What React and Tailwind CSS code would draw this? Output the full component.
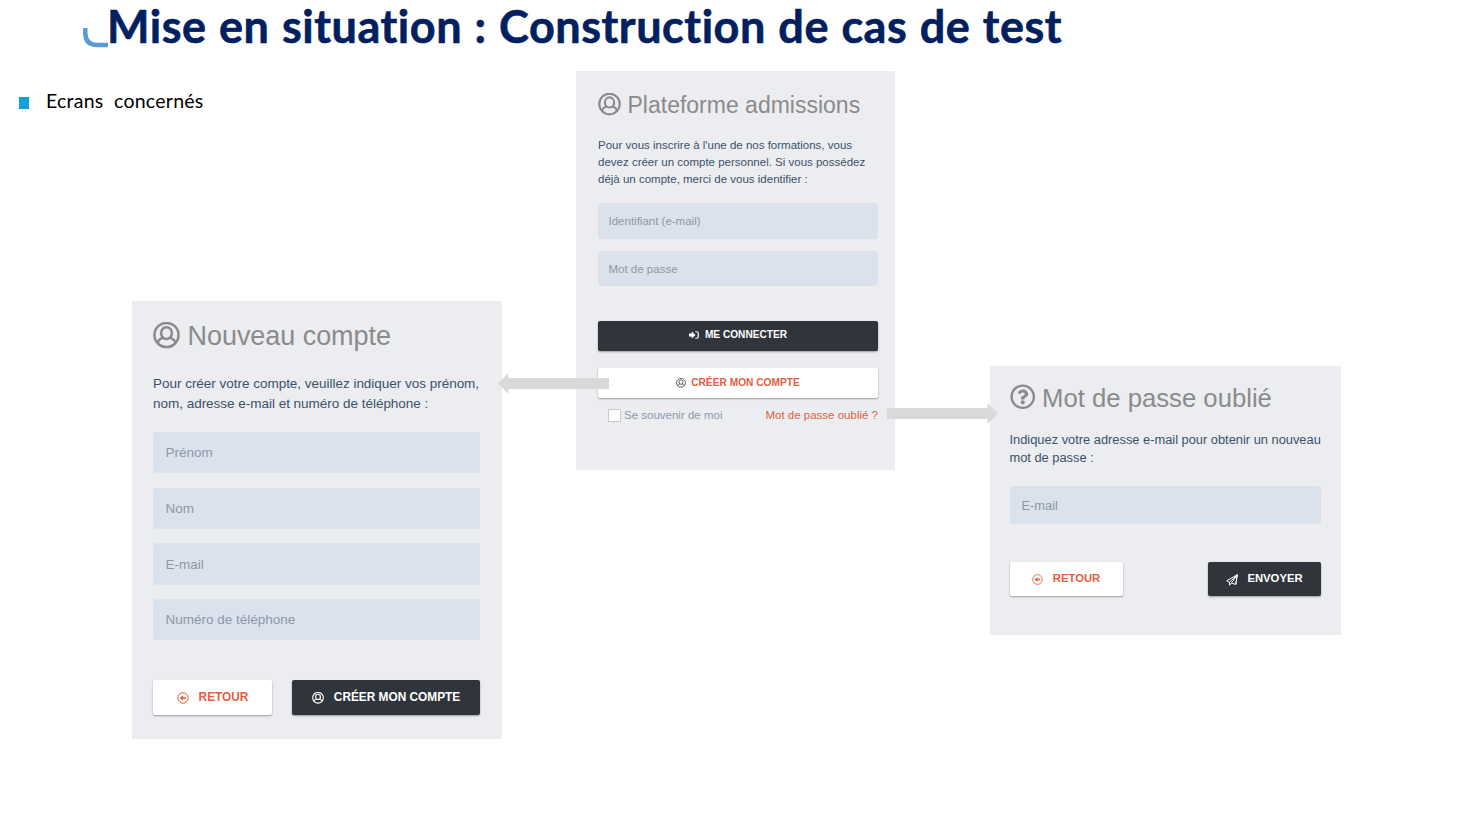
import { FaRegQuestionCircle } from "react-icons/fa";

function UserCircle({ className }) {
  return (
    <svg viewBox="0 0 26 26" className={className} fill="none" stroke="currentColor" strokeWidth="2.4">
      <circle cx="13" cy="12.500" r="11.600" />
      <ellipse cx="13" cy="10.700" rx="5.200" ry="5.700" />
      <path d="M4.600 20.200c.4-3 2.200-4.300 5.600-4.900M21.400 20.200c-.4-3-2.200-4.300-5.600-4.900" />
    </svg>
  );
}

function BackCircle({ className }) {
  return (
    <svg viewBox="0 0 24 24" className={className} fill="none" stroke="currentColor" strokeWidth="2">
      <circle cx="12" cy="12" r="10.500" />
      <path d="M18 12h-7" strokeWidth="3.400" />
      <path d="M5.500 12l6.500-5.500v11z" fill="currentColor" stroke="none" />
    </svg>
  );
}

function SignIn({ className }) {
  return (
    <svg viewBox="0 0 20 16" className={className} fill="currentColor">
      <path d="M0 5h5.500V1L13 8l-7.500 7v-4H0z" />
      <path d="M12.500 1.500h3a3 3 0 0 1 3 3v7a3 3 0 0 1-3 3h-3" fill="none" stroke="currentColor" strokeWidth="2.400" />
    </svg>
  );
}

function PaperPlane({ className }) {
  return (
    <svg viewBox="0 0 24 24" className={className} fill="none" stroke="currentColor" strokeWidth="2" strokeLinejoin="round">
      <path d="M22.500 1.500L1.500 13.500l5.500 3v6l4-4.500 8.500 3z" />
      <path d="M22.500 1.500L7 16.500M22.500 1.500L11 18M22.500 1.500L19.500 21" />
    </svg>
  );
}

function Field({ label, className }) {
  return <div className={`flex items-center rounded-[3px] bg-[#dce2ec] text-[#8b98a9] ${className}`}>{label}</div>;
}

const shadow = "shadow-[0_1px_2px_rgba(0,0,0,0.35)]";
const light = `flex items-center justify-center rounded-[2px] bg-white font-bold text-[#e2603f] ${shadow}`;
const dark = `flex items-center justify-center rounded-[2px] bg-[#30353b] font-bold text-white ${shadow}`;

export default function App() {
  return (
    <main className="relative h-[816px] w-[1464px] overflow-hidden bg-white font-['Liberation_Sans',sans-serif]">
      <header className="flex h-[54px] items-start pl-[83px]">
        <svg viewBox="0 0 25 20" className="mt-[28px] h-5 w-[25px] shrink-0" fill="none" stroke="#5b9bd5" strokeWidth="4.500">
          <path d="M2.300 0v5q0 12 12 12H25" />
        </svg>
        <h1 className="-mt-px -ml-px whitespace-nowrap font-['Lato',sans-serif] text-[45px] leading-[54px] font-bold tracking-[0.55px] text-[#002060] [word-spacing:0.9px] [-webkit-text-stroke:0.6px_#002060]">
          Mise en situation : Construction de cas de test
        </h1>
      </header>
      <div className="flex items-center pt-[34px] pl-[19px]">
        <span className="mt-[4px] h-3 w-[10px] bg-[#12a0dc]" />
        <span className="ml-[17px] whitespace-pre font-['Lato',sans-serif] text-[19.500px] leading-[26px] tracking-[0.25px] text-black">Ecrans  concernés</span>
      </div>

      <section className="absolute top-[301px] left-[132px] flex h-[438px] w-[370px] flex-col bg-[#ecedf1] pr-[22px] pl-[21px] text-[13.5px]">
        <h2 className="mt-[18px] flex h-8 items-center text-[27px] text-[#8b8b8b]">
          <UserCircle className="mr-[7.500px] h-[27px] w-[27px]" /><span className="translate-y-px tracking-[-0.050px]">Nouveau compte</span>
        </h2>
        <p className="mt-[23px] leading-[19.7px] tracking-[-0.020px] whitespace-nowrap text-[#3b5168]">
          Pour créer votre compte, veuillez indiquer vos prénom,<br />nom, adresse e-mail et numéro de téléphone :
        </p>
        <div className="mt-[18.500px] flex flex-col gap-[14.600px]">
          <Field label="Prénom" className="h-[41.200px] pt-px pl-[12.500px]" />
          <Field label="Nom" className="h-[41.200px] pt-px pl-[12.500px]" />
          <Field label="E-mail" className="h-[41.200px] pt-[2px] pl-[12.500px]" />
          <Field label="Numéro de téléphone" className="h-[41.200px] pt-px pl-[12.500px]" />
        </div>
        <div className="mt-[40px] flex justify-between text-[11.850px]">
          <button className={`h-[35px] w-[119px] ${light}`}><BackCircle className="mr-[10px] h-3 w-3" />RETOUR</button>
          <button className={`h-[35px] w-[188px] ${dark}`}><UserCircle className="mr-[10px] h-3 w-3" />CRÉER MON COMPTE</button>
        </div>
      </section>

      <section className="absolute top-[71px] left-[576px] flex h-[399px] w-[319px] flex-col bg-[#ecedf1] pr-[17px] pl-[22px] text-[11.5px]">
        <h2 className="mt-[18px] flex h-[30px] items-center text-[23px] text-[#8b8b8b]">
          <UserCircle className="mr-[6.500px] h-[23px] w-[23px]" /><span className="translate-y-px">Plateforme admissions</span>
        </h2>
        <p className="mt-[18.300px] leading-[16.700px] whitespace-nowrap text-[#3b5168]">
          Pour vous inscrire à l'une de nos formations, vous<br />devez créer un compte personnel. Si vous possédez<br />déjà un compte, merci de vous identifier :
        </p>
        <Field label="Identifiant (e-mail)" className="mt-[15.700px] h-[36px] shrink-0 pt-px pl-[10.500px]" />
        <Field label="Mot de passe" className="mt-[12px] h-[35px] shrink-0 pt-[2px] pl-[10.500px]" />
        <button className={`mt-[34.500px] h-[30px] shrink-0 pb-px text-[10.150px] ${dark}`}><SignIn className="mr-[6px] h-2 w-[10px]" />ME CONNECTER</button>
        <button className={`mt-[17.500px] h-[30px] shrink-0 text-[10.200px] ${light}`}><UserCircle className="mr-[5px] h-[10px] w-[10px] text-[#555]" />CRÉER MON COMPTE</button>
        <div className="mt-[9px] flex h-4 items-center justify-between pl-[10px]">
          <label className="flex items-center text-[#8b98a9]"><span className="mr-[3px] h-[13px] w-[13px] border border-[#c8c8c8] bg-white" /><span className="translate-y-px">Se souvenir de moi</span></label>
          <a className="translate-y-px text-[#e2603f]">Mot de passe oublié ?</a>
        </div>
      </section>

      <section className="absolute top-[366px] left-[990px] flex h-[269px] w-[351px] flex-col bg-[#ecedf1] pr-[20px] pl-[19.500px] text-[12.850px]">
        <h2 className="mt-[16px] flex h-8 items-center text-[25.700px] text-[#8b8b8b]">
          <FaRegQuestionCircle className="mr-[7px] h-[25.500px] w-[25.500px] -translate-y-px" />Mot de passe oublié
        </h2>
        <p className="mt-[17px] leading-[18px] whitespace-nowrap text-[#3b5168]">
          Indiquez votre adresse e-mail pour obtenir un nouveau<br />mot de passe :
        </p>
        <Field label="E-mail" className="mt-[19px] h-[38px] shrink-0 pt-px pl-[12px]" />
        <div className="mt-[38px] flex justify-between text-[11.300px]">
          <button className={`h-[34px] w-[113px] pb-px ${light}`}><BackCircle className="mr-[10px] h-[11px] w-[11px] translate-y-px" />RETOUR</button>
          <button className={`h-[34px] w-[113px] pb-px ${dark}`}><PaperPlane className="mr-[9px] h-[12px] w-[12px] translate-y-px" />ENVOYER</button>
        </div>
      </section>

      <svg viewBox="0 0 111 21" className="absolute top-[373px] left-[497.500px] h-[21px] w-[111px]" fill="#d9d9d9">
        <path d="M0 10.500L10.500 0v5H111v11H10.500v5z" />
      </svg>
      <svg viewBox="0 0 111 21" className="absolute top-[403px] left-[887px] h-[21px] w-[111px]" fill="#d9d9d9">
        <path d="M111 10.500L100.500 0v5H0v11h100.500v5z" />
      </svg>
    </main>
  );
}
